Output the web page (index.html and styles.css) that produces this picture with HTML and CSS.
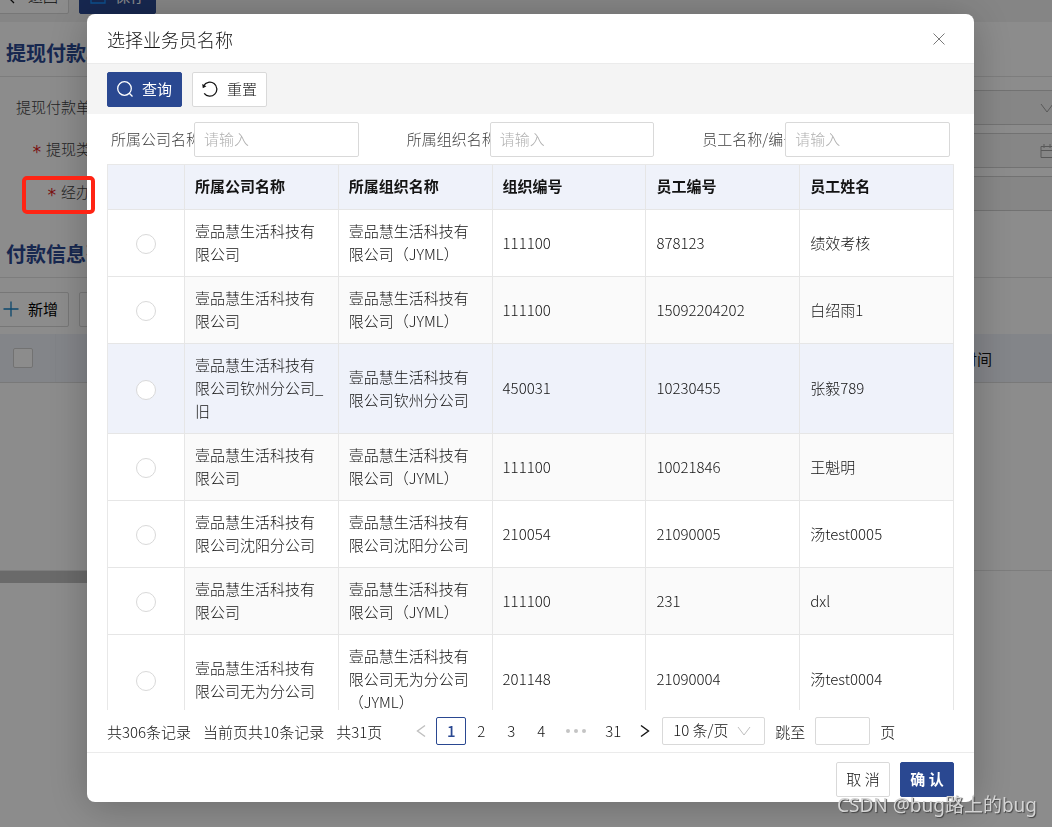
FILE: index.html
```html
<!DOCTYPE html>
<html lang="zh-CN">
<head>
<meta charset="utf-8">
<title>选择业务员名称</title>
<link rel="stylesheet" href="styles.css">
</head>
<body>
<main class="page">
  <div class="page-bar">
    <button class="btn back" type="button"><svg class="icon" viewBox="0 0 16 16"><path d="M11 1 4 8l7 7"/></svg>返回</button>
    <button class="btn primary save" type="button"><svg class="icon save-icon" viewBox="0 0 16 16"><path d="M1 1h14v14H1zM5 1v5h6V1"/></svg>保存</button>
  </div>
  <h2 class="section-title">提现付款单</h2>
  <div class="page-form">
    <div class="page-field"><label class="page-label" for="bill">提现付款单号</label><span class="page-control"><input id="bill" type="text" disabled><svg class="control-icon" viewBox="0 0 14 14"><path d="M1 3l6 8 6-8"/></svg></span></div>
    <div class="page-field"><label class="page-label required" for="kind">提现类型</label><span class="page-control"><input id="kind" type="text" disabled><svg class="control-icon" viewBox="0 0 14 14"><path d="M1 2.500h12v11H1zM1 6.500h12M4 0v4M10 0v4"/></svg></span></div>
    <div class="page-field"><label class="page-label required" for="agent">经办人</label><span class="page-control"><input id="agent" type="text" disabled></span></div>
  </div>
  <h2 class="section-title">付款信息列表</h2>
  <div class="list-bar">
    <button class="btn add" type="button"><svg class="icon add-icon" viewBox="0 0 16 16"><path d="M8 0.500v15M0.500 8h15"/></svg>新增</button>
    <button class="btn" type="button">删除</button>
  </div>
  <div class="list-head"><span class="list-check"><input type="checkbox" aria-label="全选"></span><span class="list-time">时间</span></div>
  <div class="list-body"></div>
  <div class="list-scroll"></div>
</main>

<div class="mask">
  <section class="modal" role="dialog" aria-labelledby="modal-title">
    <header class="modal-head">
      <h1 id="modal-title">选择业务员名称</h1>
      <button class="close" type="button" aria-label="关闭"><svg viewBox="0 0 12 12"><path d="M0.500 0.500l11 11M11.500 0.500l-11 11"/></svg></button>
    </header>
    <div class="tools">
      <button class="btn primary" type="button"><svg class="icon" viewBox="0 0 16 16"><circle cx="7.500" cy="7.500" r="6.800"/><path d="M12.300 12.300l3.200 3.200"/></svg>查询</button>
      <button class="btn" type="button"><svg class="icon" viewBox="0 0 16 16"><path d="M1.700 4.800A7 7 0 1 1 2.200 12.300"/><path class="fill" d="M0.200 3l0.600 4.200 3.600-2z"/></svg>重置</button>
    </div>
    <form class="filters">
      <div class="filter"><label for="f1">所属公司名称</label><input id="f1" type="text" placeholder="请输入"></div>
      <div class="filter"><label for="f2">所属组织名称</label><input id="f2" type="text" placeholder="请输入"></div>
      <div class="filter"><label for="f3">员工名称/编号</label><input id="f3" type="text" placeholder="请输入"></div>
    </form>
    <div class="table-wrap">
      <table>
        <colgroup><col class="pick-col"><col><col><col><col><col></colgroup>
        <thead><tr><th></th><th>所属公司名称</th><th>所属组织名称</th><th>组织编号</th><th>员工编号</th><th>员工姓名</th></tr></thead>
        <tbody>
          <tr><td><input type="radio" name="emp" aria-label="绩效考核"></td><td>壹品慧生活科技有限公司</td><td>壹品慧生活科技有限公司（JYML）</td><td>111100</td><td>878123</td><td>绩效考核</td></tr>
          <tr><td><input type="radio" name="emp" aria-label="白绍雨1"></td><td>壹品慧生活科技有限公司</td><td>壹品慧生活科技有限公司（JYML）</td><td>111100</td><td>15092204202</td><td>白绍雨1</td></tr>
          <tr class="active"><td><input type="radio" name="emp" aria-label="张毅789"></td><td>壹品慧生活科技有限公司钦州分公司_旧</td><td>壹品慧生活科技有限公司钦州分公司</td><td>450031</td><td>10230455</td><td>张毅789</td></tr>
          <tr><td><input type="radio" name="emp" aria-label="王魁明"></td><td>壹品慧生活科技有限公司</td><td>壹品慧生活科技有限公司（JYML）</td><td>111100</td><td>10021846</td><td>王魁明</td></tr>
          <tr><td><input type="radio" name="emp" aria-label="汤test0005"></td><td>壹品慧生活科技有限公司沈阳分公司</td><td>壹品慧生活科技有限公司沈阳分公司</td><td>210054</td><td>21090005</td><td>汤test0005</td></tr>
          <tr><td><input type="radio" name="emp" aria-label="dxl"></td><td>壹品慧生活科技有限公司</td><td>壹品慧生活科技有限公司（JYML）</td><td>111100</td><td>231</td><td>dxl</td></tr>
          <tr><td><input type="radio" name="emp" aria-label="汤test0004"></td><td>壹品慧生活科技有限公司无为分公司</td><td>壹品慧生活科技有限公司无为分公司（JYML）</td><td>201148</td><td>21090004</td><td>汤test0004</td></tr>
        </tbody>
      </table>
    </div>
    <nav class="pager" aria-label="分页">
      <div class="totals"><span>共306条记录</span><span>当前页共10条记录</span><span>共31页</span></div>
      <div class="pages">
        <button class="page-no prev" type="button" aria-label="上一页" disabled><svg class="arrow" viewBox="0 0 10 14"><path d="M9 1.500L1.500 7 9 12.500"/></svg></button>
        <button class="page-no current" type="button">1</button>
        <button class="page-no" type="button">2</button>
        <button class="page-no" type="button">3</button>
        <button class="page-no" type="button">4</button>
        <span class="dots"><i></i><i></i><i></i></span>
        <button class="page-no last" type="button">31</button>
        <button class="page-no" type="button" aria-label="下一页"><svg class="arrow" viewBox="0 0 10 14"><path d="M1 1.500L8.500 7 1 12.500"/></svg></button>
      </div>
      <div class="size"><select aria-label="每页条数"><option>10 条/页</option></select><svg class="size-icon" viewBox="0 0 14 14"><path d="M1 3l6 8 6-8"/></svg></div>
      <label class="jump">跳至<input type="text">页</label>
    </nav>
    <footer class="modal-foot">
      <button class="btn" type="button">取 消</button>
      <button class="btn primary strong" type="button">确 认</button>
    </footer>
  </section>
</div>
<div class="highlight"></div>
<div class="watermark">CSDN @bug路上的bug</div>
</body>
</html>
```
FILE: styles.css
```css
* { box-sizing: border-box; }

body {
  margin: 0;
  height: 100vh;
  overflow: hidden;
  position: relative;
  color: #141414;
  background: #fff;
  font: 300 15px/23px "Noto Sans CJK SC", sans-serif;
}

button, input, select { font: inherit; color: inherit; }
h1, h2 { margin: 0; }
svg { fill: none; stroke: currentColor; flex: none; }
.fill { fill: currentColor; stroke: none; }

.btn {
  display: inline-flex;
  align-items: center;
  justify-content: center;
  flex: none;
  gap: 9px;
  height: 35px;
  min-width: 54px;
  padding: 0 9px 2px;
  border: 1px solid #d9d9d9;
  border-radius: 2px;
  background: #fff;
  white-space: nowrap;
}
.btn.primary { background: #2a4891; border-color: #2a4891; color: #fff; font-weight: 400; }
.btn.strong { font-weight: 700; }
.icon { width: 16px; height: 16px; stroke-width: 1.3; }

/* page behind the dialog */
.page { width: calc(100% + 20px); }
.page-bar {
  display: flex;
  align-items: flex-end;
  gap: 10px;
  height: 22px;
  padding-bottom: 8px;
  background: #f3f3f3;
  overflow: hidden;
}
.back { margin-left: -8px; width: 77px; }
.save { width: 77px; }
.save-icon { color: #1890ff; }
.section-title {
  height: 55px;
  padding: 0 6px;
  border-bottom: 1px solid #e4e4e4;
  color: #2a4891;
  font-size: 20px;
  font-weight: 700;
  line-height: 62px;
}
.page-form { display: grid; gap: 9px; padding: 13px 0; }
.page-field { display: flex; align-items: center; }
.page-label { width: 106px; padding-bottom: 2px; text-align: right; color: #404040; white-space: nowrap; }
.required::before {
  content: "*";
  margin-right: 4px;
  color: #e02020;
  font: 400 17px/17px "DejaVu Sans Mono", monospace;
  vertical-align: -3px;
}
.page-control { position: relative; flex: 1; height: 34px; margin-left: 12px; }
.page-control input { width: 100%; height: 35px; border: 1px solid #d0d0d0; background: #f5f5f5; }
.control-icon { position: absolute; right: 18px; top: 11px; width: 14px; height: 14px; color: #a0a0a0; }
.list-bar { display: flex; gap: 10px; padding: 14px 0 7px; }
.add { margin-left: -8px; width: 77px; color: #000; font-weight: 400; }
.add-icon { color: #1683c6; }
.list-head {
  display: flex;
  align-items: center;
  justify-content: space-between;
  height: 49px;
  padding-right: 80px;
  border-bottom: 1px solid #dcdcdc;
  background: #eff2fa;
  font-weight: 400;
}
.list-check { display: flex; align-items: center; height: 100%; width: 56px; padding-left: 13px; border-right: 1px solid #e9ecf5; }
.list-check input { appearance: none; width: 20px; height: 20px; margin: 0; border: 1px solid #d0d0d0; border-radius: 2px; background: #fff; }
.list-body { height: 188px; border-bottom: 1px solid #e4e4e4; }
.list-scroll { width: 800px; height: 12px; background: #c1c1c1; }

/* dialog */
.mask {
  position: fixed;
  inset: 0;
  display: flex;
  padding: 14px 78px 25px 87px;
  background: rgba(0, 0, 0, 0.45);
}
.modal {
  flex: 1;
  min-width: 0;
  display: flex;
  flex-direction: column;
  overflow: hidden;
  border-radius: 8px;
  background: #fff;
  box-shadow: 0 4px 40px rgba(0, 0, 0, 0.25);
}
.modal-head {
  display: flex;
  align-items: center;
  justify-content: space-between;
  height: 50px;
  padding: 1px 29px 0 20px;
  border-bottom: 1px solid #ebebeb;
}
.modal-head h1 { font-size: 18px; font-weight: 300; }
.close { display: flex; padding: 0; border: 0; background: none; color: #7a7a7a; }
.close svg { width: 12px; height: 12px; }
.tools { display: flex; gap: 10px; padding: 8px 20px 7px; background: #f4f4f4; }
.filters { display: grid; grid-template-columns: repeat(3, minmax(0, 1fr)); padding: 8px 0 7px; }
.filter { display: flex; align-items: center; padding: 0 24px; }
.filter label { width: 83px; flex: none; padding-bottom: 2px; overflow: hidden; white-space: nowrap; color: #404040; }
.filter input { flex: 1; min-width: 0; height: 35px; padding: 0 9px 2px; border: 1px solid #d9d9d9; border-radius: 2px; }
.filter input::placeholder { color: #b0b0b0; opacity: 1; }

.table-wrap { flex: 1; min-height: 0; margin: 0 20px; overflow: hidden; }
table {
  width: 100%;
  table-layout: fixed;
  border-collapse: separate;
  border-spacing: 0;
  border: solid #e8e8e8;
  border-width: 1px 0 0 1px;
}
.pick-col { width: 77px; }
th, td { padding: 9px 10px 11px; border: solid #e6e6e6; border-width: 0 1px 1px 0; text-align: left; word-break: break-all; }
th { height: 45px; padding: 8px 10px 12px; background: #eff2fa; font-weight: 700; }
tbody tr:nth-child(even) td { background: #fafafa; }
tbody tr td:first-child { padding: 11px 10px 9px; }
tbody tr:nth-child(even) td:first-child { background: #fff; }
tbody tr.active td { background: #eff2fa; }
input[type="radio"] {
  appearance: none;
  display: block;
  width: 20px;
  height: 20px;
  margin: 0 auto;
  border: 1px solid #d9d9d9;
  border-radius: 50%;
  background: #fff;
}

.pager { display: flex; align-items: center; height: 42px; padding: 0 20px; white-space: nowrap; }
.totals { display: flex; gap: 12px; }
.pages { display: flex; align-items: center; margin-left: 24px; }
.page-no {
  display: flex;
  align-items: center;
  justify-content: center;
  width: 30px;
  height: 28px;
  padding: 0 0 1px;
  border: 1px solid transparent;
  border-radius: 2px;
  background: none;
}
.page-no.current { border-color: #2a4891; color: #2a4891; font-weight: 500; }
.page-no.prev { color: #bfbfbf; }
.page-no.last { width: 34px; }
.arrow { width: 10px; height: 14px; stroke-width: 1.4; }
.dots { display: flex; justify-content: center; gap: 4px; width: 40px; }
.dots i { width: 4px; height: 4px; border-radius: 50%; background: #c4c4c4; }
.size { position: relative; margin-left: 2px; }
.size select { appearance: none; display: block; width: 103px; height: 28px; padding: 0 10px 3px; border: 1px solid #d9d9d9; border-radius: 2px; background: #fff; }
.size-icon { position: absolute; right: 14px; top: 7px; width: 14px; height: 14px; color: #bfbfbf; pointer-events: none; }
.jump { display: flex; align-items: center; gap: 10px; margin-left: 10px; }
.jump input { width: 55px; height: 28px; border: 1px solid #d9d9d9; border-radius: 2px; }

.modal-foot { display: flex; justify-content: flex-end; gap: 10px; padding: 9px 20px 5px; border-top: 1px solid #ebebeb; }

.highlight {
  position: absolute;
  left: 22px;
  top: 176px;
  width: 73px;
  height: 38px;
  border: 4px solid #ff2414;
  border-radius: 5px;
}
.watermark {
  position: absolute;
  right: 15px;
  bottom: 8px;
  color: #d4d4d4;
  font: 400 19px/28px "Noto Sans", "Noto Sans CJK SC", sans-serif;
  text-shadow: 1px 1px 1px #444;
}
```
